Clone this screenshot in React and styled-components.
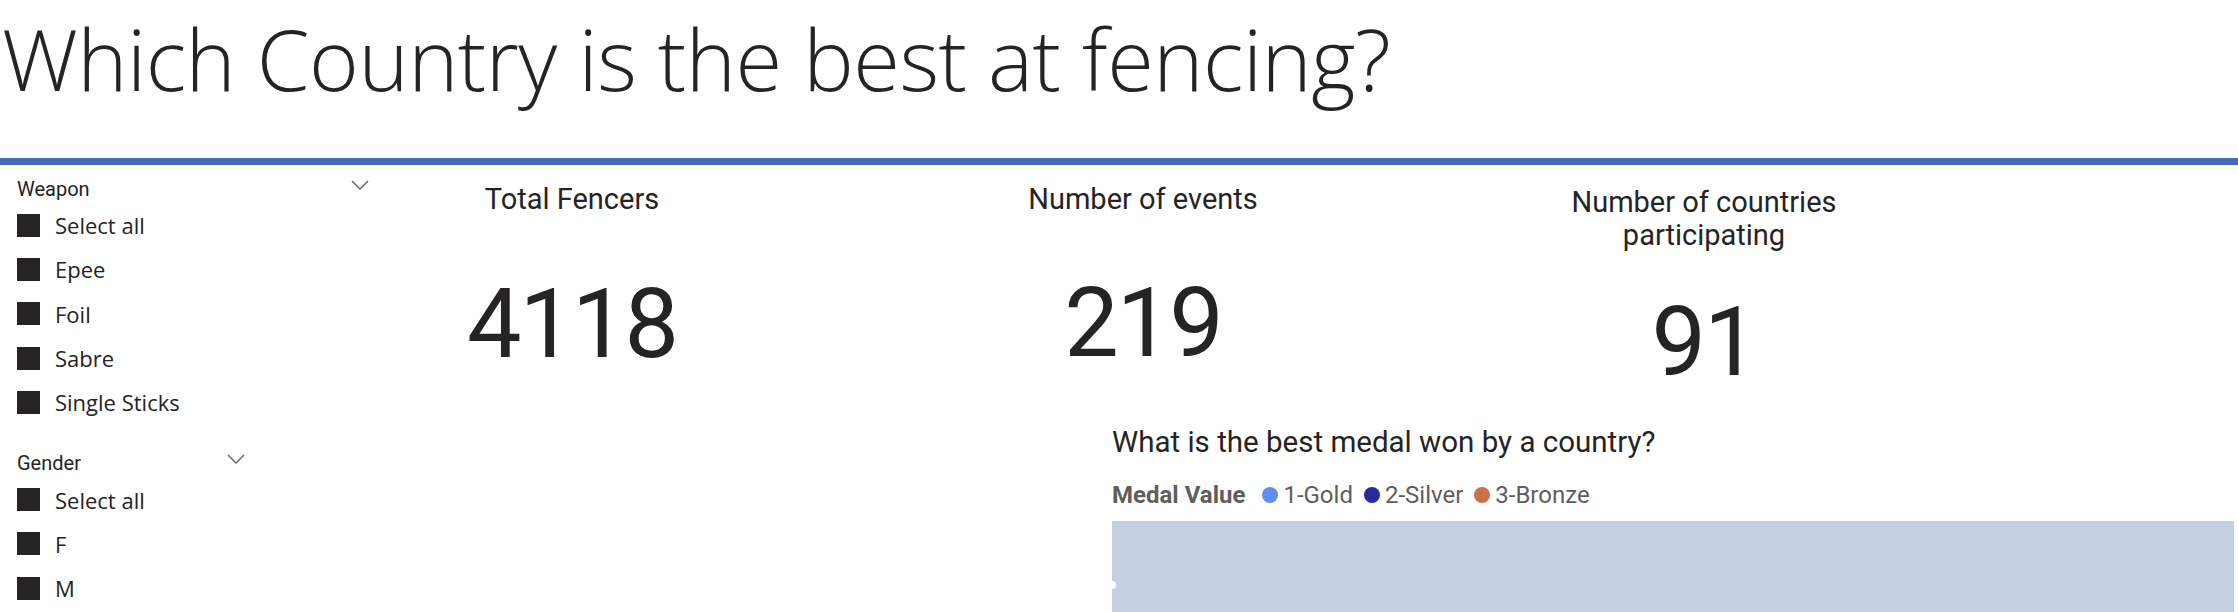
import React from "react";
import styled, { createGlobalStyle } from "styled-components";

const GlobalStyle = createGlobalStyle`
  html, body {
    margin: 0;
    padding: 0;
    background: #ffffff;
    overflow: hidden;
  }
  body {
    font-family: "Open Sans", "Liberation Sans", sans-serif;
    color: #252423;
  }
`;

const weapons = ["Select all", "Epee", "Foil", "Sabre", "Single Sticks"];
const genders = ["Select all", "F", "M"];

const cards = [
  { title: "Total Fencers", value: "4118", offset: 0, gap: 60, gutter: 0 },
  { title: "Number of events", value: "219", offset: 0, gap: 59, gutter: 191 },
  { title: "Number of countries participating", value: "91", offset: 3, gap: 42, gutter: 181 },
];

const legend = [
  { label: "1-Gold", color: "#5f8ff3" },
  { label: "2-Silver", color: "#2a2a9c" },
  { label: "3-Bronze", color: "#c8714a" },
];

function Chevron() {
  return (
    <svg width="18" height="10" viewBox="0 0 18 10">
      <polyline
        points="1,1 9,9 17,1"
        fill="none"
        stroke="#605e5c"
        strokeWidth="1.3"
      />
    </svg>
  );
}

function Slicer({ title, items, width }) {
  return (
    <SlicerBox $width={width}>
      <SlicerHeader>
        <span>{title}</span>
        <ChevronWrap>
          <Chevron />
        </ChevronWrap>
      </SlicerHeader>
      {items.map((item) => (
        <SlicerItem key={item}>
          <CheckBox />
          <span>{item}</span>
        </SlicerItem>
      ))}
    </SlicerBox>
  );
}

export default function App() {
  return (
    <Page>
      <GlobalStyle />
      <Header>
        <Title>Which Country is the best at fencing?</Title>
      </Header>
      <Divider />
      <Body>
        <SideBar>
          <Slicer title="Weapon" items={weapons} width={352} />
          <Slicer title="Gender" items={genders} width={228} />
        </SideBar>
        <Main>
          <CardRow>
            {cards.map((c) => (
              <Card key={c.title} $offset={c.offset} $gutter={c.gutter}>
                <CardTitle>{c.title}</CardTitle>
                <CardValue $gap={c.gap}>{c.value}</CardValue>
              </Card>
            ))}
          </CardRow>
          <MedalSection>
            <MedalTitle>What is the best medal won by a country?</MedalTitle>
            <Legend>
              <LegendTitle>Medal Value</LegendTitle>
              {legend.map((l) => (
                <LegendItem key={l.label}>
                  <Dot $color={l.color} />
                  {l.label}
                </LegendItem>
              ))}
            </Legend>
            <MapArea>
              <Island />
            </MapArea>
          </MedalSection>
        </Main>
      </Body>
    </Page>
  );
}

const Page = styled.div`
  width: 2238px;
  height: 612px;
  overflow: hidden;
`;

const Header = styled.header`
  height: 158px;
  padding-top: 8px;
  box-sizing: border-box;
`;

const Title = styled.h1`
  margin: 0 0 0 2px;
  font-family: "Open Sans", sans-serif;
  font-weight: 300;
  font-size: 85px;
  line-height: 100px;
  letter-spacing: -0.5px;
  color: #252423;
  white-space: nowrap;
`;

const Divider = styled.div`
  height: 7px;
  background: #4569b9;
`;

const Body = styled.div`
  display: flex;
`;

const SideBar = styled.aside`
  width: 382px;
  flex-shrink: 0;
  padding: 12px 0 0 17px;
  box-sizing: border-box;
  display: flex;
  flex-direction: column;
  gap: 27px;
`;

const SlicerBox = styled.div`
  width: ${(p) => p.$width}px;
`;

const SlicerHeader = styled.div`
  display: flex;
  justify-content: space-between;
  align-items: flex-start;
  height: 24px;
  margin-bottom: 2px;
  font-family: Roboto, sans-serif;
  font-size: 20px;
  line-height: 24px;
  color: #252423;
`;

const ChevronWrap = styled.div`
  margin-top: 3px;
  display: flex;
`;

const SlicerItem = styled.div`
  display: flex;
  align-items: center;
  gap: 15px;
  height: 44.3px;
  font-family: "Open Sans", sans-serif;
  font-size: 22px;
  color: #252423;
`;

const CheckBox = styled.div`
  width: 23px;
  height: 23px;
  background: #252423;
  flex-shrink: 0;
`;

const Main = styled.main`
  flex: 1;
  display: flex;
  flex-direction: column;
`;

const CardRow = styled.div`
  display: flex;
  padding-top: 18px;
  align-items: flex-start;
`;

const Card = styled.div`
  width: 380px;
  margin-left: ${(p) => p.$gutter}px;
  padding-top: ${(p) => p.$offset}px;
  text-align: center;
`;

const CardTitle = styled.div`
  font-family: Roboto, sans-serif;
  font-size: 29px;
  line-height: 33px;
  color: #252423;
  width: 300px;
  margin: 0 auto;
`;

const CardValue = styled.div`
  margin-top: ${(p) => p.$gap}px;
  font-family: Roboto, sans-serif;
  font-size: 97px;
  line-height: 97px;
  letter-spacing: -2px;
  color: #252423;
`;

const MedalSection = styled.section`
  margin: 34px 0 0 730px;
  width: 1122px;
`;

const MedalTitle = styled.div`
  font-family: Roboto, sans-serif;
  font-size: 29.5px;
  line-height: 34px;
  color: #252423;
`;

const Legend = styled.div`
  display: flex;
  align-items: center;
  height: 30px;
  margin-top: 21px;
  font-family: Roboto, sans-serif;
  font-size: 24px;
  color: #605e5c;
  gap: 11px;
`;

const LegendTitle = styled.span`
  font-weight: 700;
  margin-right: 6px;
`;

const LegendItem = styled.span`
  display: flex;
  align-items: center;
  gap: 5px;
`;

const Dot = styled.span`
  width: 16px;
  height: 16px;
  border-radius: 50%;
  background: ${(p) => p.$color};
`;

const MapArea = styled.div`
  position: relative;
  margin-top: 11px;
  height: 91px;
  background: #c4cfe1;
`;

const Island = styled.span`
  position: absolute;
  left: 0;
  top: 60px;
  width: 4px;
  height: 8px;
  border-radius: 0 4px 4px 0;
  background: #ffffff;
`;
